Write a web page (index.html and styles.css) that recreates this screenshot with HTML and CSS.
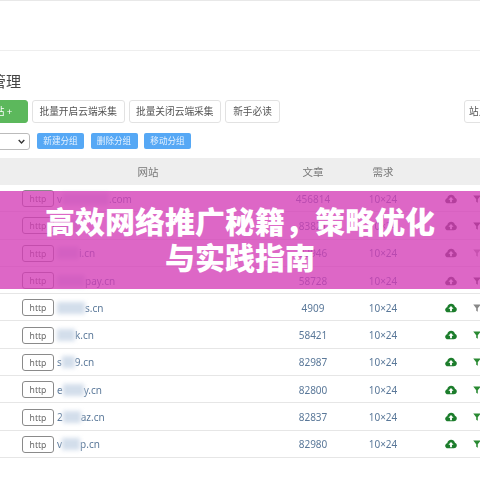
FILE: index.html
```html
<!DOCTYPE html>
<html lang="zh-CN">
<head>
<meta charset="utf-8">
<title>高效网络推广秘籍，策略优化与实践指南</title>
<link rel="stylesheet" href="styles.css">
</head>
<body>
<svg class="defs" width="0" height="0" aria-hidden="true">
  <symbol id="cloud" viewBox="0 0 14 11">
    <path fill="currentColor" d="M3.3 10.6C1.5 10.6 0.2 9.3 0.2 7.6c0-1.5 1-2.7 2.4-3C3 2.3 4.9 0.6 7.2 0.6c2.1 0 3.9 1.4 4.4 3.4 1.3.4 2.2 1.6 2.2 3 0 2-1.5 3.6-3.5 3.6z"/>
    <path fill="#fff" d="M7 3.2 10 6.4H8.1v2.8H5.9V6.4H4z"/>
  </symbol>
  <symbol id="funnel" viewBox="0 0 10 10">
    <path fill="currentColor" d="M0.3 0.6h9.4L6 5.2v4.4L4 8.4V5.2z"/>
  </symbol>
</svg>
<div class="shell">
  <header class="topbar"></header>
  <h1 class="title">站点管理</h1>
  <div class="toolbar">
    <button class="btn btn-green">添加网站 +</button>
    <button class="btn">批量开启云端采集</button>
    <button class="btn">批量关闭云端采集</button>
    <button class="btn">新手必读</button>
    <span class="btn search">站点搜索</span>
  </div>
  <div class="filters">
    <span class="select">全部网站<svg class="chev" viewBox="0 0 10 6"><path d="M1 1l4 4 4-4" fill="none" stroke="#333" stroke-width="2"/></svg></span>
    <button class="tag">新建分组</button>
    <button class="tag">删除分组</button>
    <button class="tag">移动分组</button>
  </div>
  <div class="table">
    <div class="row head">
      <span></span><span class="c">网站</span><span class="c">文章</span><span class="c">需求</span><span></span>
    </div>
    <div class="row">
      <span></span><span class="site"><i class="http">http</i><span class="dom">v<b class="smear w47"></b>.com</span></span><span class="c">456814</span><span class="c">10×24</span><span class="ops"><svg class="ic cloud dim"><use href="#cloud"/></svg><svg class="ic funnel dim"><use href="#funnel"/></svg></span>
    </div>
    <div class="row">
      <span></span><span class="site"><i class="http">http</i><span class="dom"><b class="smear w22"></b></span></span><span class="c">83821</span><span class="c">10×24</span><span class="ops"><svg class="ic cloud dim"><use href="#cloud"/></svg><svg class="ic funnel dim"><use href="#funnel"/></svg></span>
    </div>
    <div class="row">
      <span></span><span class="site"><i class="http">http</i><span class="dom"><b class="smear w22"></b>i.cn</span></span><span class="c">82946</span><span class="c">10×24</span><span class="ops"><svg class="ic cloud dim"><use href="#cloud"/></svg><svg class="ic funnel dim light"><use href="#funnel"/></svg></span>
    </div>
    <div class="row">
      <span></span><span class="site"><i class="http">http</i><span class="dom"><b class="smear w28"></b>pay.cn</span></span><span class="c">58728</span><span class="c">10×24</span><span class="ops"><svg class="ic cloud dim"><use href="#cloud"/></svg><svg class="ic funnel dim"><use href="#funnel"/></svg></span>
    </div>
    <div class="row">
      <span></span><span class="site"><i class="http">http</i><span class="dom"><b class="smear w28"></b>s.cn</span></span><span class="c">4909</span><span class="c">10×24</span><span class="ops"><svg class="ic cloud"><use href="#cloud"/></svg><svg class="ic funnel off"><use href="#funnel"/></svg></span>
    </div>
    <div class="row">
      <span></span><span class="site"><i class="http">http</i><span class="dom"><b class="smear w18"></b>k.cn</span></span><span class="c">58421</span><span class="c">10×24</span><span class="ops"><svg class="ic cloud"><use href="#cloud"/></svg><svg class="ic funnel"><use href="#funnel"/></svg></span>
    </div>
    <div class="row">
      <span></span><span class="site"><i class="http">http</i><span class="dom">s<b class="smear w13"></b>9.cn</span></span><span class="c">82987</span><span class="c">10×24</span><span class="ops"><svg class="ic cloud"><use href="#cloud"/></svg><svg class="ic funnel"><use href="#funnel"/></svg></span>
    </div>
    <div class="row">
      <span></span><span class="site"><i class="http">http</i><span class="dom">e<b class="smear w21"></b>y.cn</span></span><span class="c">82800</span><span class="c">10×24</span><span class="ops"><svg class="ic cloud"><use href="#cloud"/></svg><svg class="ic funnel"><use href="#funnel"/></svg></span>
    </div>
    <div class="row">
      <span></span><span class="site"><i class="http">http</i><span class="dom">2<b class="smear w18"></b>az.cn</span></span><span class="c">82837</span><span class="c">10×24</span><span class="ops"><svg class="ic cloud"><use href="#cloud"/></svg><svg class="ic funnel"><use href="#funnel"/></svg></span>
    </div>
    <div class="row">
      <span></span><span class="site"><i class="http">http</i><span class="dom">v<b class="smear w18"></b>p.cn</span></span><span class="c">82980</span><span class="c">10×24</span><span class="ops"><svg class="ic cloud"><use href="#cloud"/></svg><svg class="ic funnel"><use href="#funnel"/></svg></span>
    </div>
  </div>
</div>
<div class="banner">
  <p>高效网络推广秘籍，策略优化<br>与实践指南</p>
</div>
</body>
</html>
```
FILE: styles.css
```css
* { box-sizing: border-box; }
html, body { margin: 0; padding: 0; }
body {
  width: 480px;
  height: 480px;
  overflow: hidden;
  position: relative;
  background: #fff;
  font-family: "Noto Sans", "Noto Sans CJK SC", sans-serif;
}
.defs { position: absolute; }
.shell {
  width: 560px;
  margin-left: -50px;
  filter: blur(0.4px);
}
.topbar {
  height: 51px;
  border-top: 1px solid #e8e8e8;
  border-bottom: 1px solid #eee;
}
.title {
  margin: 20px 0 0 11px;
  height: 20px;
  font-size: 15px;
  line-height: 20px;
  font-weight: 400;
  color: #444;
}
.toolbar {
  display: flex;
  gap: 4px;
  margin-top: 9px;
  height: 23px;
}
.btn {
  flex: none;
  height: 23px;
  width: 92.5px;
  padding: 0;
  border: 1px solid #e2e2e2;
  border-radius: 3px;
  background: #fff;
  font: inherit;
  font-size: 9.7px;
  color: #555;
  line-height: 21px;
  text-align: center;
}
.btn:nth-child(4) { width: 55px; }
.btn-green {
  width: 78px;
  background: #5cb85c;
  border-color: #5cb85c;
  color: #fff;
}
.search {
  margin-left: 180px;
  width: 80px;
  text-align: left;
  padding-left: 4px;
}
.filters {
  display: flex;
  align-items: center;
  gap: 6.5px;
  margin-top: 9px;
  height: 18px;
}
.select {
  display: flex;
  align-items: center;
  justify-content: space-between;
  width: 80px;
  height: 17px;
  margin-right: 0.5px;
  padding: 0 4px 0 8px;
  border: 1px solid #bbb;
  border-radius: 3px;
  font-size: 9px;
  color: #666;
}
.chev { width: 7px; height: 5px; }
.tag {
  width: 47px;
  height: 16px;
  padding: 0;
  border: 0;
  border-radius: 2px;
  background: #56a8f5;
  color: #e6f2ff;
  font: inherit;
  font-size: 8.6px;
  line-height: 16px;
}
.table { margin-top: 8px; }
.row {
  display: grid;
  grid-template-columns: 72px 252px 78px 62px 96px;
  align-items: center;
  height: 27.3px;
  padding-top: 1px;
  border-bottom: 1px solid #e6e6e6;
  font-size: 10px;
  color: #5a7899;
}
.head {
  height: 27px;
  padding-top: 0;
  background: #eee;
  border-bottom: 0;
  font-size: 10.5px;
  color: #777;
}
.c { text-align: center; }
.site { display: flex; align-items: center; gap: 3px; }
.http {
  width: 32px;
  height: 17px;
  border: 1px solid #8a8a8a;
  border-radius: 3px;
  color: #666;
  font-style: normal;
  font-size: 8.6px;
  line-height: 16px;
  text-align: center;
}
.dom { display: flex; align-items: center; font-size: 10px; }
.smear {
  display: block;
  height: 12px;
  background: #d3deeb;
  filter: blur(2px);
}
.w13 { width: 13px; }
.w18 { width: 18px; }
.w21 { width: 21px; }
.w22 { width: 22px; }
.w28 { width: 28px; }
.w47 { width: 47px; }
.ops { display: flex; align-items: center; gap: 16px; padding-left: 31px; }
.ic { display: block; flex: none; }
.cloud { width: 12px; height: 10px; color: #1c7d2c; }
.funnel { width: 8px; height: 8px; color: #2a8a33; }
.funnel.off { color: #888; }
.cloud.dim, .funnel.dim { color: #444; }
.funnel.light { color: #999; }
.banner {
  position: absolute;
  left: 0;
  top: 191px;
  width: 480px;
  height: 98px;
  display: flex;
  align-items: center;
  justify-content: center;
  background: rgba(212, 60, 182, 0.78);
}
.banner p {
  margin: -4px 0 0;
  font-family: "Noto Sans CJK SC", sans-serif;
  font-size: 30px;
  font-weight: 900;
  line-height: 36px;
  color: #fff;
  text-align: center;
}
```
